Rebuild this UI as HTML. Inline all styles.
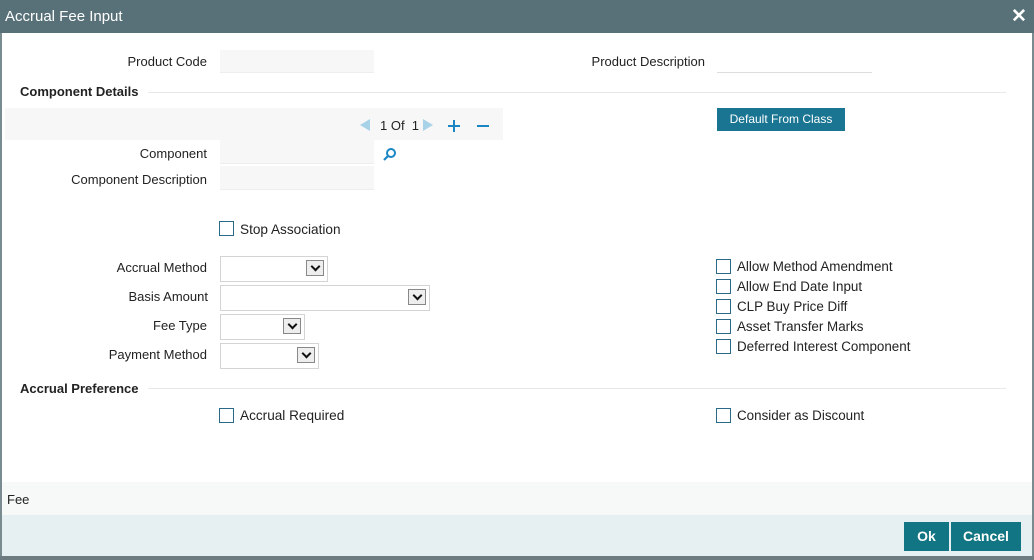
<!DOCTYPE html>
<html><head><style>
*{margin:0;padding:0;box-sizing:border-box}
body{width:1034px;height:560px;position:relative;background:#fff;font-family:"Liberation Sans",Arial,sans-serif;font-size:13px;color:#222;overflow:hidden}
.a{position:absolute}
.lbl{position:absolute;text-align:right;width:200px}
.inp{position:absolute;background:#f7f7f7;border-bottom:1px solid #eee}
.sel{position:absolute;border:1px solid #d4d4d4;background:#fff}
.sel i{position:absolute;right:3px;top:3px;width:18px;height:16px;border:1px solid #888;background:#eee}
.sel i:after{content:"";position:absolute;left:5px;top:2px;width:5px;height:5px;border-right:2px solid #111;border-bottom:2px solid #111;transform:rotate(45deg)}
.cb{position:absolute;width:15px;height:15px;border:1px solid #2a6a88;background:#fff}
.h{position:absolute;font-weight:bold}
.line{position:absolute;height:1px;background:#e8e8e8}
.r{font-size:13.4px}
</style></head><body>
<div class="a" style="left:0;top:0;width:1034px;height:33px;background:#587178"></div>
<div class="a" style="left:5px;top:8px;color:#fff;font-size:15px">Accrual Fee Input</div>
<div class="a" style="left:1011px;top:5px;color:#fff;font-size:19px;font-weight:bold">✕</div>
<div class="a" style="left:0;top:33px;width:2px;height:527px;background:#7a8b90"></div>
<div class="a" style="left:1032px;top:33px;width:2px;height:527px;background:#7a8b90"></div>
<div class="a" style="left:0;top:556px;width:1034px;height:4px;background:#6d7c80"></div>

<div class="lbl" style="left:7px;top:54px">Product Code</div>
<div class="inp" style="left:220px;top:50px;width:154px;height:23px"></div>
<div class="lbl" style="left:505px;top:54px">Product Description</div>
<div class="a" style="left:717px;top:72px;width:155px;height:1px;background:#ddd"></div>

<div class="h" style="left:20px;top:84px">Component Details</div>
<div class="line" style="left:148px;top:92px;width:858px"></div>
<div class="a" style="left:5px;top:108px;width:498px;height:32px;background:#f7f7f7"></div>
<div class="a" style="left:360px;top:119px;width:0;height:0;border-top:6px solid transparent;border-bottom:6px solid transparent;border-right:10px solid #a8d2e8"></div>
<div class="a" style="left:380px;top:118px">1 Of&nbsp; 1</div>
<div class="a" style="left:423px;top:119px;width:0;height:0;border-top:6px solid transparent;border-bottom:6px solid transparent;border-left:10px solid #a8d2e8"></div>
<div class="a" style="left:448px;top:125px;width:12px;height:2px;background:#1a86c4"></div>
<div class="a" style="left:453px;top:120px;width:2px;height:12px;background:#1a86c4"></div>
<div class="a" style="left:477px;top:125px;width:12px;height:2px;background:#1a86c4"></div>
<div class="a" style="left:717px;top:108px;width:128px;height:23px;background:#1a7593;color:#fff;font-size:12px;text-align:center;line-height:23px">Default From Class</div>

<div class="lbl" style="left:7px;top:146px">Component</div>
<div class="inp" style="left:220px;top:140px;width:154px;height:24px"></div>
<svg class="a" style="left:383px;top:147px" width="14" height="14"><circle cx="8" cy="6" r="4" fill="none" stroke="#1a86c4" stroke-width="2"/><line x1="5" y1="9" x2="1" y2="13" stroke="#1a86c4" stroke-width="2.2"/></svg>
<div class="lbl" style="left:7px;top:172px">Component Description</div>
<div class="inp" style="left:220px;top:166px;width:154px;height:24px"></div>

<div class="cb" style="left:219px;top:221px"></div>
<div class="a" style="left:240px;top:222px;font-size:13.6px">Stop Association</div>

<div class="lbl" style="left:7px;top:260px">Accrual Method</div>
<div class="sel" style="left:220px;top:256px;width:108px;height:26px"><i></i></div>
<div class="lbl" style="left:8px;top:289px">Basis Amount</div>
<div class="sel" style="left:220px;top:285px;width:210px;height:26px"><i></i></div>
<div class="lbl" style="left:7px;top:318px">Fee Type</div>
<div class="sel" style="left:220px;top:314px;width:85px;height:26px"><i></i></div>
<div class="lbl" style="left:7px;top:347px">Payment Method</div>
<div class="sel" style="left:220px;top:343px;width:99px;height:26px"><i></i></div>

<div class="cb" style="left:716px;top:259px"></div><div class="a r" style="left:737px;top:259px">Allow Method Amendment</div>
<div class="cb" style="left:716px;top:279px"></div><div class="a r" style="left:737px;top:279px">Allow End Date Input</div>
<div class="cb" style="left:716px;top:299px"></div><div class="a r" style="left:737px;top:299px">CLP Buy Price Diff</div>
<div class="cb" style="left:716px;top:319px"></div><div class="a r" style="left:737px;top:319px">Asset Transfer Marks</div>
<div class="cb" style="left:716px;top:339px"></div><div class="a r" style="left:737px;top:339px">Deferred Interest Component</div>

<div class="h" style="left:20px;top:381px">Accrual Preference</div>
<div class="line" style="left:148px;top:388px;width:858px"></div>
<div class="cb" style="left:219px;top:408px"></div><div class="a" style="left:240px;top:408px;font-size:13.6px">Accrual Required</div>
<div class="cb" style="left:716px;top:408px"></div><div class="a r" style="left:737px;top:408px">Consider as Discount</div>

<div class="a" style="left:2px;top:482px;width:1030px;height:33px;background:#f7f9f9"></div>
<div class="a" style="left:7px;top:492px">Fee</div>
<div class="a" style="left:2px;top:515px;width:1030px;height:41px;background:#e6f0f2"></div>
<div class="a" style="left:904px;top:522px;width:45px;height:29px;background:#127583;color:#fff;font-weight:bold;font-size:14px;text-align:center;line-height:29px">Ok</div>
<div class="a" style="left:951px;top:522px;width:70px;height:29px;background:#127583;color:#fff;font-weight:bold;font-size:14px;text-align:center;line-height:29px">Cancel</div>
</body></html>
